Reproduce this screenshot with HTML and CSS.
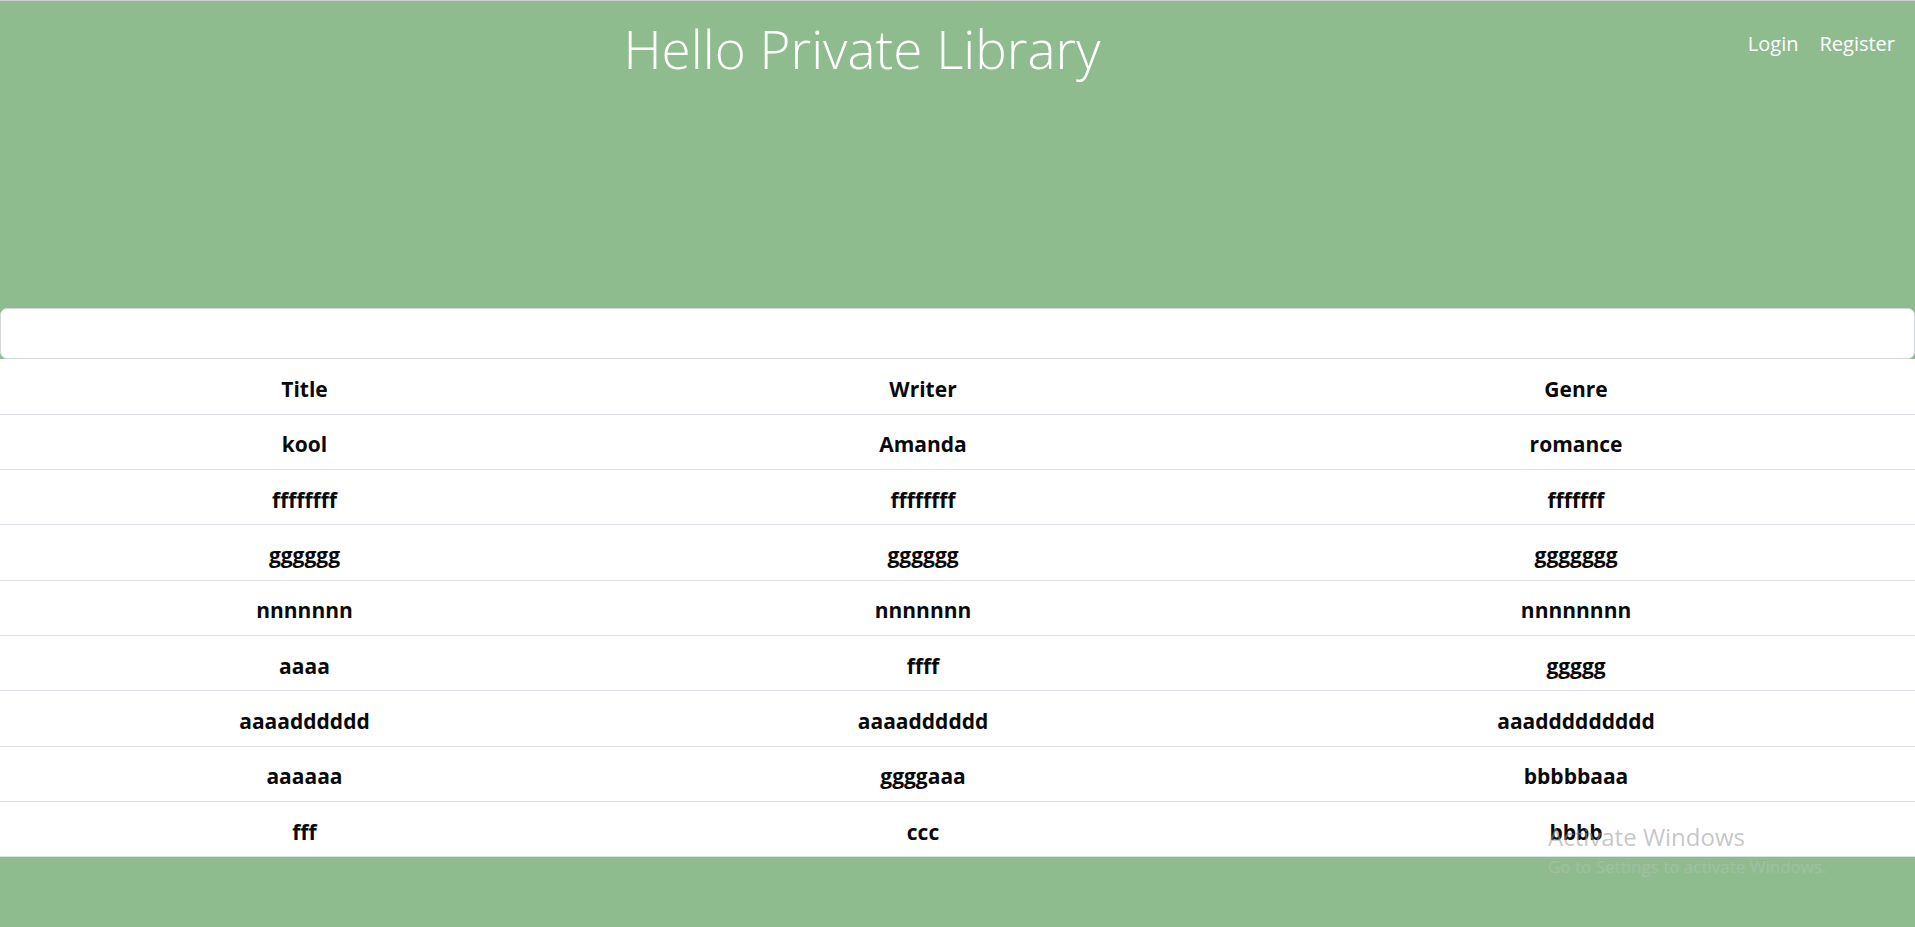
FILE: index.html
```html
<!DOCTYPE html>
<html lang="en">
<head>
<meta charset="utf-8">
<title>Hello Private Library</title>
<link rel="stylesheet" href="styles.css">
</head>
<body>
<div class="page">
  <header class="header">
    <div class="title-wrap"><h1 class="title">Hello Private Library</h1></div>
    <nav class="nav">
      <a class="nav-link" href="#">Login</a>
      <a class="nav-link" href="#">Register</a>
    </nav>
  </header>
  <input class="search" type="text" aria-label="Search">
  <table class="books">
    <colgroup>
      <col class="c1"><col class="c2"><col class="c3">
    </colgroup>
    <thead>
      <tr><th>Title</th><th>Writer</th><th>Genre</th></tr>
    </thead>
    <tbody>
      <tr><td>kool</td><td>Amanda</td><td>romance</td></tr>
      <tr><td>ffffffff</td><td>ffffffff</td><td>fffffff</td></tr>
      <tr><td>gggggg</td><td>gggggg</td><td>ggggggg</td></tr>
      <tr><td>nnnnnnn</td><td>nnnnnnn</td><td>nnnnnnnn</td></tr>
      <tr><td>aaaa</td><td>ffff</td><td>ggggg</td></tr>
      <tr><td>aaaadddddd</td><td>aaaadddddd</td><td>aaaddddddddd</td></tr>
      <tr><td>aaaaaa</td><td>ggggaaa</td><td>bbbbbaaa</td></tr>
      <tr><td>fff</td><td>ccc</td><td>bbbb</td></tr>
    </tbody>
  </table>
</div>
<div class="watermark">
  <div class="wm-1">Activate Windows</div>
  <div class="wm-2">Go to Settings to activate Windows.</div>
</div>
</body>
</html>
```
FILE: styles.css
```css
html, body {
  margin: 0;
  padding: 0;
}
body {
  background: #8fbc8f;
  border-top: 1px solid #cfcfcf;
  font-family: "Open Sans", "Liberation Sans", sans-serif;
  min-height: 926px;
  position: relative;
}
.header {
  display: flex;
  align-items: flex-start;
  height: 307px;
  box-sizing: border-box;
  padding-top: 16px;
}
.title-wrap {
  flex: 0 0 1724px;
  text-align: center;
}
.title {
  margin: 0;
  font-size: 53px;
  font-weight: 350;
  line-height: 1.2;
  color: #fff;
}
.nav {
  display: flex;
  gap: 21px;
  margin-top: 15px;
  margin-left: auto;
  padding-right: 20px;
}
.nav-link {
  color: #fff;
  text-decoration: none;
  font-size: 20px;
  line-height: 1.2;
}
.search {
  display: block;
  width: 100%;
  height: 51px;
  box-sizing: border-box;
  margin: 0;
  border: 1px solid #d4d7da;
  border-radius: 7px;
  background: #fff;
  outline: none;
}
.books {
  width: 100%;
  table-layout: fixed;
  border-collapse: collapse;
  background: #fff;
}
.c1 { width: 31.8%; }
.c2 { width: 32.8%; }
.c3 { width: 35.4%; }
.books th,
.books td {
  height: 55.33px;
  padding: 5px 0 0;
  box-sizing: border-box;
  text-align: center;
  vertical-align: middle;
  font-size: 21px;
  font-weight: 700;
  color: #0a0a0a;
  border-bottom: 1px solid #dee2e6;
}
.watermark {
  position: absolute;
  left: 1548px;
  top: 820px;
  pointer-events: none;
  font-family: "Open Sans", "Liberation Sans", sans-serif;
}
.wm-1 {
  font-size: 24px;
  line-height: 32px;
  color: rgba(150, 150, 150, 0.55);
}
.wm-2 {
  font-size: 17px;
  line-height: 24px;
  margin-top: 2px;
  color: rgba(200, 200, 200, 0.3);
}
```
